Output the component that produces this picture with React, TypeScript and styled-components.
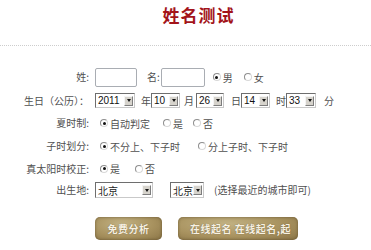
import styled, { createGlobalStyle } from "styled-components";

const GlobalStyle = createGlobalStyle`
  html, body {
    margin: 0;
    padding: 0;
    background: #fff;
  }
  body {
    font-family: "Noto Sans CJK SC", "Liberation Sans", sans-serif;
  }
`;

const Page = styled.div`
  width: 371px;
  height: 250px;
  overflow: hidden;
  background: #fff;
`;

const Header = styled.div`
  height: 46px;
  box-sizing: border-box;
  display: flex;
  justify-content: center;
  padding-left: 26px;
  border-bottom: 1px dotted #cdcdcd;
`;

const Title = styled.h1`
  margin: 4px 0 0;
  font-size: 17px;
  line-height: 22px;
  font-weight: 700;
  color: #a3141a;
  letter-spacing: 1px;
`;

const Form = styled.div`
  margin-top: 19px;
  display: flex;
  flex-direction: column;
  font-size: 10px;
  color: #505050;
`;

const Row = styled.div<{ $h: number }>`
  height: ${(p) => p.$h}px;
  display: flex;
  align-items: center;
  white-space: nowrap;
`;

const Label = styled.div`
  width: 89px;
  margin-right: 6px;
  text-align: right;
  line-height: 14px;
`;

const TextBox = styled.div<{ $w: number; $l?: number }>`
  width: ${(p) => p.$w}px;
  height: 19px;
  margin-left: ${(p) => p.$l ?? 0}px;
  box-sizing: border-box;
  border: 1px solid #a9adb3;
  border-radius: 2px;
  background: #fff;
`;

const Inline = styled.span<{ $l?: number; $r?: number }>`
  margin-left: ${(p) => p.$l ?? 0}px;
  margin-right: ${(p) => p.$r ?? 0}px;
  line-height: 14px;
`;

const Option = styled.span<{ $l?: number; $r?: number }>`
  display: inline-flex;
  align-items: center;
  margin-left: ${(p) => p.$l ?? 0}px;
  margin-right: ${(p) => p.$r ?? 0}px;
`;

const Radio = styled.span<{ $on?: boolean }>`
  width: 6px;
  height: 6px;
  margin: 0 2px 0 5px;
  border-radius: 50%;
  border: 1px solid #8e8e8e;
  border-right-color: #d8d8d8;
  border-bottom-color: #d8d8d8;
  background: #fff;
  position: relative;
  &::after {
    content: "";
    display: ${(p) => (p.$on ? "block" : "none")};
    position: absolute;
    left: 1.5px;
    top: 1.5px;
    width: 3px;
    height: 3px;
    border-radius: 50%;
    background: #111;
  }
`;

const SelectBox = styled.div<{ $w: number; $h?: number; $l?: number }>`
  width: ${(p) => p.$w}px;
  height: ${(p) => p.$h ?? 15}px;
  margin-left: ${(p) => p.$l ?? 0}px;
  box-sizing: border-box;
  display: flex;
  align-items: center;
  justify-content: space-between;
  padding: 0 1px 0 2px;
  border: 1px solid;
  border-color: #6e6e6e #c9c9c9 #c9c9c9 #6e6e6e;
  background: #fff;
  font-family: "Liberation Sans", "Noto Sans CJK SC", sans-serif;
  font-size: 10px;
  color: #111;
`;

const CjkValue = styled.span`
  font-family: "Noto Sans CJK SC", sans-serif;
  color: #222;
`;

const Arrow = styled.span`
  width: 9px;
  height: 10px;
  box-sizing: border-box;
  display: flex;
  align-items: center;
  justify-content: center;
  background: #d6d3cc;
  border: 1px solid;
  border-color: #f4f4f4 #7d7d7d #7d7d7d #f4f4f4;
  &::after {
    content: "";
    border-left: 2px solid transparent;
    border-right: 2px solid transparent;
    border-top: 3px solid #111;
  }
`;

const Buttons = styled.div`
  margin-top: 16px;
  padding-left: 95px;
  display: flex;
  gap: 16px;
`;

const Button = styled.div<{ $w: number; $start?: boolean }>`
  width: ${(p) => p.$w}px;
  height: 23px;
  box-sizing: border-box;
  padding: ${(p) => (p.$start ? "0 0 0 12px" : "0 10px")};
  display: flex;
  align-items: center;
  justify-content: ${(p) => (p.$start ? "flex-start" : "center")};
  white-space: nowrap;
  border-radius: 5px;
  background: radial-gradient(ellipse at 40% 30%, #c2b283 0%, #a8925f 55%, #8a7446 100%);
  box-shadow: inset 0 0 3px rgba(70, 55, 25, 0.6);
  color: #f7f1e2;
  font-size: 10px;
  font-weight: 700;
  letter-spacing: 0.5px;
  text-shadow: 0 0 1px rgba(60, 45, 20, 0.6);
`;

function Select({
  value,
  w,
  h,
  l,
  cjk,
}: {
  value: string;
  w: number;
  h?: number;
  l?: number;
  cjk?: boolean;
}) {
  return (
    <SelectBox $w={w} $h={h} $l={l}>
      {cjk ? <CjkValue>{value}</CjkValue> : <span>{value}</span>}
      <Arrow />
    </SelectBox>
  );
}

export default function App() {
  return (
    <Page>
      <GlobalStyle />
      <Header>
        <Title>姓名测试</Title>
      </Header>
      <Form>
        <Row $h={24}>
          <Label>姓:</Label>
          <TextBox $w={42} />
          <Inline $l={10}>名:</Inline>
          <TextBox $w={44} $l={1} />
          <Option $l={3} $r={6}>
            <Radio $on />男
          </Option>
          <Option>
            <Radio />女
          </Option>
        </Row>
        <Row $h={23}>
          <Label>生日（公历）：</Label>
          <Select value="2011" w={40} />
          <Inline $l={6}>年</Inline>
          <Select value="10" w={29} />
          <Inline $l={4} $r={2}>月</Inline>
          <Select value="26" w={28} />
          <Inline $l={7}>日</Inline>
          <Select value="14" w={29} />
          <Inline $l={6}>时</Inline>
          <Select value="33" w={30} />
          <Inline $l={8}>分</Inline>
        </Row>
        <Row $h={22}>
          <Label>夏时制:</Label>
          <Option $r={8}>
            <Radio $on />自动判定
          </Option>
          <Option $r={5}>
            <Radio />是
          </Option>
          <Option>
            <Radio />否
          </Option>
        </Row>
        <Row $h={24}>
          <Label>子时划分:</Label>
          <Option $r={13}>
            <Radio $on />不分上、下子时
          </Option>
          <Option>
            <Radio />分上子时、下子时
          </Option>
        </Row>
        <Row $h={21}>
          <Label>真太阳时校正:</Label>
          <Option $r={10}>
            <Radio $on />是
          </Option>
          <Option>
            <Radio />否
          </Option>
        </Row>
        <Row $h={22}>
          <Label>出生地:</Label>
          <Select value="北京" w={58} h={16} cjk />
          <Select value="北京" w={34} h={16} l={17} cjk />
          <Inline $l={10}>(选择最近的城市即可)</Inline>
        </Row>
      </Form>
      <Buttons>
        <Button $w={67}>免费分析</Button>
        <Button $w={120} $start>
          在线起名 在线起名,起
        </Button>
      </Buttons>
    </Page>
  );
}
